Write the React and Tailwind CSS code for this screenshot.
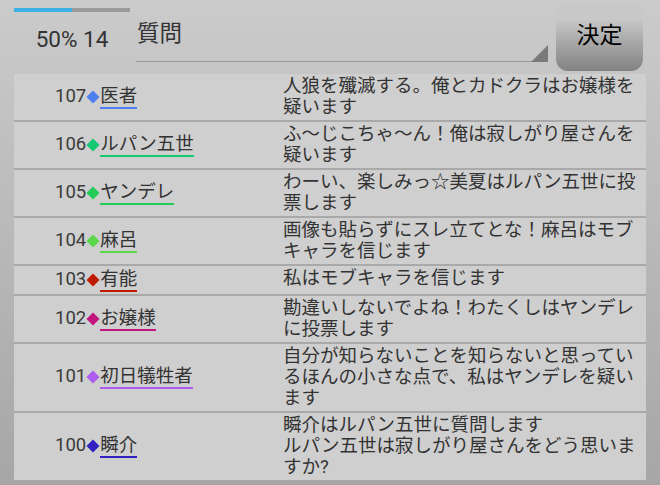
const rows = [
  { no: 107, name: '医者', color: '#4f7ef0', msg: '人狼を殲滅する。俺とカドクラはお嬢様を疑います' },
  { no: 106, name: 'ルパン五世', color: '#14c873', msg: 'ふ～じこちゃ～ん！俺は寂しがり屋さんを疑います' },
  { no: 105, name: 'ヤンデレ', color: '#22cc55', msg: 'わーい、楽しみっ☆美夏はルパン五世に投票します' },
  { no: 104, name: '麻呂', color: '#5ad84a', msg: '画像も貼らずにスレ立てとな！麻呂はモブキャラを信じます' },
  { no: 103, name: '有能', color: '#c01a00', msg: '私はモブキャラを信じます' },
  { no: 102, name: 'お嬢様', color: '#c2137e', msg: '勘違いしないでよね！わたくしはヤンデレに投票します' },
  { no: 101, name: '初日犠牲者', color: '#ad5cf0', msg: '自分が知らないことを知らないと思っているほんの小さな点で、私はヤンデレを疑います' },
  { no: 100, name: '瞬介', color: '#3320c0', msg: '瞬介はルパン五世に質問します\nルパン五世は寂しがり屋さんをどう思いますか?' },
];

const Diamond = ({ color }) => (
  <svg width="14" height="14" viewBox="0 0 14 14" className="shrink-0">
    <path d="M7 0.5 L13.5 7 L7 13.5 L0.5 7 Z" fill={color} />
  </svg>
);

const App = () => {
  return (
    <div
      className="h-[485px] w-[660px] overflow-hidden bg-gradient-to-b from-[#cbcbcb] to-[#a6a6a6] text-[#333]"
      style={{ fontFamily: 'Roboto, "Noto Sans CJK JP", sans-serif' }}
    >
      {/* header */}
      <div className="flex h-[74px] items-start">
        <div className="ml-[14px] w-[116px] pt-[8px]">
          <div className="flex h-[4px] w-full bg-[#9a9a9a]">
            <div className="h-full w-[58px] bg-[#3ab2e6]" />
          </div>
          <div className="mt-[12px] text-center text-[22.5px] leading-[30px] text-[#333]">50% 14</div>
        </div>
        <div className="relative ml-[6px] mt-[16px] h-[46px] w-[412px] border-b-[1.5px] border-[#9a9a9a]">
          <div className="pl-[1px] text-[22.5px] leading-[34px] text-[#333]">質問</div>
          <svg width="17" height="17" viewBox="0 0 17 17" className="absolute -bottom-[1px] right-0">
            <path d="M17 0 L17 17 L0 17 Z" fill="#7a7a7a" />
          </svg>
        </div>
        <button className="ml-[8px] mt-[2px] flex h-[69px] w-[87px] items-center justify-center rounded-[12px] bg-gradient-to-b from-[#c8c8c8] from-[25%] to-[#828282] text-[23px] text-black">
          決定
        </button>
      </div>

      {/* list */}
      <div className="mx-[14px] bg-[#cfcfcf]">
        {rows.map((r) => (
          <div key={r.no} className="grid grid-cols-[269px_1fr] border-b-2 border-[#a9a9a9]">
            <div className="flex items-center pl-[41px] text-[18.5px]">
              <span className="text-[#3a3a3a]">{r.no}</span>
              <Diamond color={r.color} />
              <span
                className="border-b-2 leading-[22px] text-[#333]"
                style={{ borderColor: r.color }}
              >
                {r.name}
              </span>
            </div>
            <div className="whitespace-pre-line py-[2px] pr-[8px] text-[18.5px] leading-[21px] text-[#333]">
              {r.msg}
            </div>
          </div>
        ))}
      </div>
    </div>
  );
};

export default App;
